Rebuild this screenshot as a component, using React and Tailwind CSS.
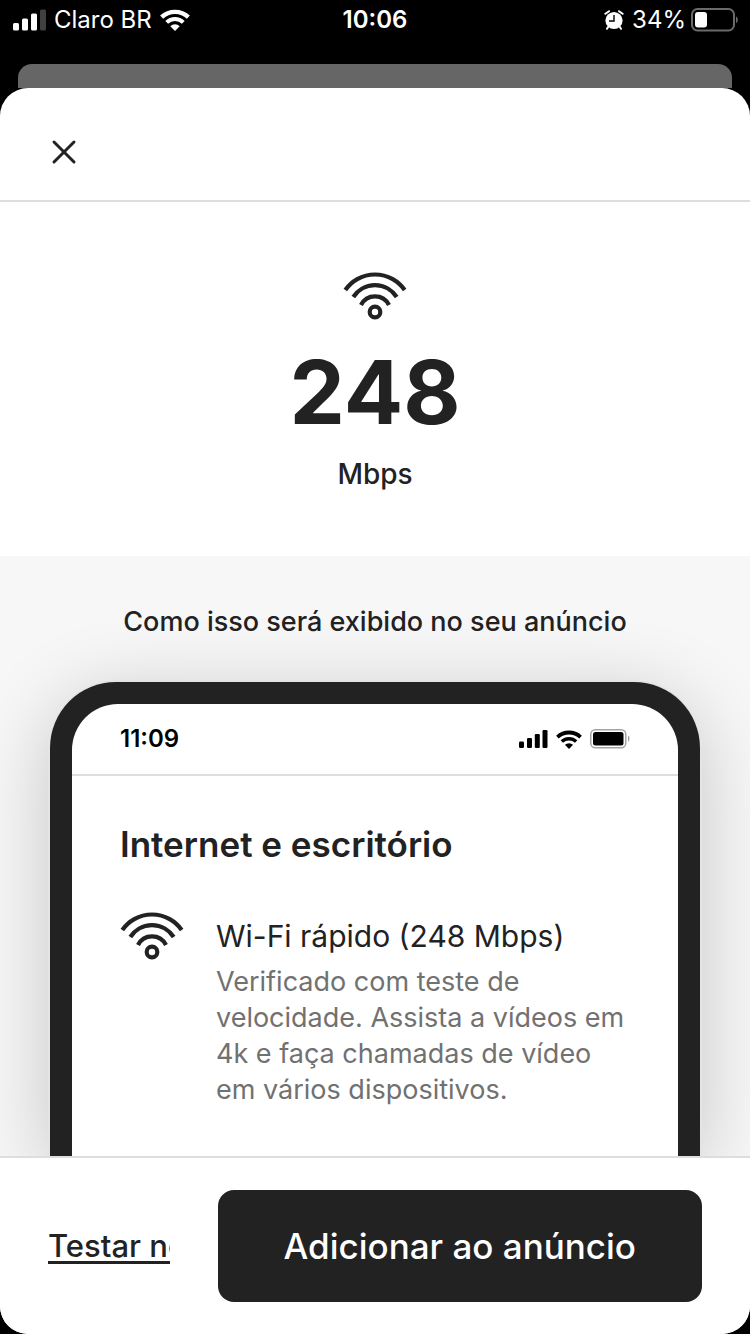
import React from 'react';
import { X } from 'lucide-react';

const WifiOutline = () => (
  <svg viewBox="0 0 64 48" className="w-16 h-12 shrink-0" fill="none" stroke="currentColor" aria-hidden="true">
    <path d="M2.3 18A36.2 36.2 0 0 1 61.7 18" strokeWidth="4.2" />
    <path d="M10.3 25A25.8 25.8 0 0 1 53.7 25" strokeWidth="4.2" />
    <path d="M18 33A15.6 15.6 0 0 1 46 33" strokeWidth="4.2" />
    <circle cx="32" cy="40" r="5.3" strokeWidth="4.2" />
  </svg>
);

const WifiSolid = ({ className }) => (
  <svg viewBox="0 0 30 22" className={className} fill="none" stroke="currentColor" aria-hidden="true">
    <path d="M1.6 8.2A19.6 19.6 0 0 1 28.4 8.2" strokeWidth="4.4" />
    <path d="M6.7 13.4A12 12 0 0 1 23.3 13.4" strokeWidth="4" />
    <path d="M15 22L10.3 17.2A6.6 6.6 0 0 1 19.7 17.2Z" fill="currentColor" stroke="none" />
  </svg>
);

const CarrierSignal = () => (
  <svg viewBox="0 0 34 22" className="w-[34px] h-[22px]" fill="currentColor" aria-hidden="true">
    <rect x="1" y="14" width="6" height="7.5" rx="1.5" />
    <rect x="10" y="9.5" width="6" height="12" rx="1.5" />
    <rect x="19" y="4.5" width="6" height="17" rx="1.5" />
    <rect x="28" y="0.5" width="6" height="21" rx="1.5" opacity="0.25" />
  </svg>
);

const AlarmIcon = () => (
  <svg viewBox="0 0 20 20" className="w-5 h-5" aria-hidden="true">
    <circle cx="10" cy="10.5" r="8.6" fill="white" />
    <path d="M1.4 3.8L5 1.2M18.6 3.8L15 1.2M4.5 16.5L3 18.8M15.5 16.5L17 18.8" stroke="white" strokeWidth="2" strokeLinecap="round" />
    <path d="M10 5V11H5" fill="none" stroke="black" strokeWidth="1.4" />
  </svg>
);

const LowBattery = () => (
  <svg viewBox="0 0 48 24" className="w-12 h-6" aria-hidden="true">
    <rect x="2" y="1" width="42" height="21.5" rx="5.5" fill="none" stroke="#6b6b6b" strokeWidth="2" />
    <rect x="5" y="4" width="12" height="15.5" rx="3" fill="white" />
    <path d="M46 8.5C48.4 9.3 48.4 14.2 46 15Z" fill="#6b6b6b" />
  </svg>
);

const PhoneSignal = () => (
  <svg viewBox="0 0 29 18" className="w-[29px] h-[18px]" fill="currentColor" aria-hidden="true">
    <rect x="0" y="11.5" width="5" height="6.5" rx="1.2" />
    <rect x="8" y="8" width="5" height="10" rx="1.2" />
    <rect x="15.8" y="4" width="5" height="14" rx="1.2" />
    <rect x="23.5" y="0" width="5" height="18" rx="1.2" />
  </svg>
);

const FullBattery = () => (
  <svg viewBox="0 0 40 20" className="w-10 h-5" aria-hidden="true">
    <rect x="0.75" y="0.75" width="35" height="18" rx="4.5" fill="none" stroke="#a3a3a3" strokeWidth="1.5" />
    <rect x="3" y="3" width="30.5" height="13.5" rx="2.5" fill="black" />
    <path d="M38 6.5C40 7.2 40 12 38 12.8Z" fill="#a3a3a3" />
  </svg>
);

const StatusBar = () => (
  <div className="grid grid-cols-3 items-center h-10 shrink-0 px-3 text-2xl text-white">
    <div className="flex items-center gap-2 whitespace-nowrap">
      <CarrierSignal />
      <span>Claro BR</span>
      <WifiSolid className="w-[30px] h-[22px]" />
    </div>
    <span className="text-center font-semibold">10:06</span>
    <div className="flex items-center justify-end gap-2">
      <AlarmIcon />
      <div className="flex items-center gap-1">
        <span>34%</span>
        <LowBattery />
      </div>
    </div>
  </div>
);

const ListingPreview = () => (
  <div className="flex-1 flex flex-col border-2 border-b-0 border-[#e4e4e4] rounded-t-[68px] shadow-[0_16px_80px_rgba(0,0,0,0.2)]">
    <div className="flex-1 flex flex-col bg-[#222222] rounded-t-[66px] px-[22px] pt-[22px]">
      <div className="flex-1 bg-white rounded-t-[46px]">
        <div className="flex items-center justify-between h-[72px] px-12 border-b-2 border-[#dddddd] text-black">
          <span className="text-2xl font-semibold">11:09</span>
          <div className="flex items-center gap-2">
            <PhoneSignal />
            <WifiSolid className="w-[26px] h-[19px]" />
            <FullBattery />
          </div>
        </div>
        <div className="px-12 pt-12 pb-12">
          <h3 className="text-[35px] leading-10 font-semibold">Internet e escritório</h3>
          <div className="flex gap-8 pt-12">
            <WifiOutline />
            <div className="min-w-0">
              <p className="text-[30px] leading-12">Wi-Fi rápido (248 Mbps)</p>
              <p className="text-[27px] leading-9 pt-1 text-[#717171]">
                Verificado com teste de velocidade. Assista a vídeos em 4k e faça chamadas de vídeo em vários dispositivos.
              </p>
            </div>
          </div>
        </div>
      </div>
    </div>
  </div>
);

const App = () => {
  return (
    <div className="flex flex-col h-screen bg-black text-[#222222] font-['Inter','Liberation_Sans',sans-serif]">
      <StatusBar />
      <div className="mt-6 mx-[18px] h-6 shrink-0 rounded-t-[14px] bg-[#666666]" />

      {/* Sheet */}
      <div className="flex-1 min-h-0 flex flex-col bg-white rounded-[28px] overflow-hidden">
        <header className="flex items-center shrink-0 h-[114px] px-11 pt-4 border-b-2 border-[#dddddd]">
          <button type="button" aria-label="Fechar" className="p-0">
            <X className="w-10 h-10" strokeWidth={1.8} />
          </button>
        </header>

        <main className="flex-1 min-h-0 flex flex-col overflow-y-auto [scrollbar-width:none]">
          <section className="flex flex-col items-center pt-[70px] pb-16 shrink-0">
            <WifiOutline />
            <p className="pt-6 text-[88px] leading-24 font-bold">248</p>
            <p className="pt-4 text-[28px] leading-9 font-medium">Mbps</p>
          </section>

          <section className="flex-1 flex flex-col px-12 pt-12 bg-[#f7f7f7]">
            <h2 className="pb-10 text-[27px] leading-9 font-medium text-center">
              Como isso será exibido no seu anúncio
            </h2>
            <ListingPreview />
          </section>
        </main>

        <footer className="relative flex items-center gap-12 shrink-0 py-8 px-12 bg-white border-t-2 border-[#dddddd]">
          <div className="flex-1 min-w-0 overflow-hidden whitespace-nowrap">
            <a href="#testar" className="text-[31px] leading-10 font-medium underline decoration-[3px] underline-offset-4">
              Testar novamente
            </a>
          </div>
          <button type="button" className="shrink-0 h-28 px-[66px] rounded-2xl bg-[#222222] text-white text-[35px] font-medium">
            Adicionar ao anúncio
          </button>
        </footer>
      </div>
    </div>
  );
};

export default App;
